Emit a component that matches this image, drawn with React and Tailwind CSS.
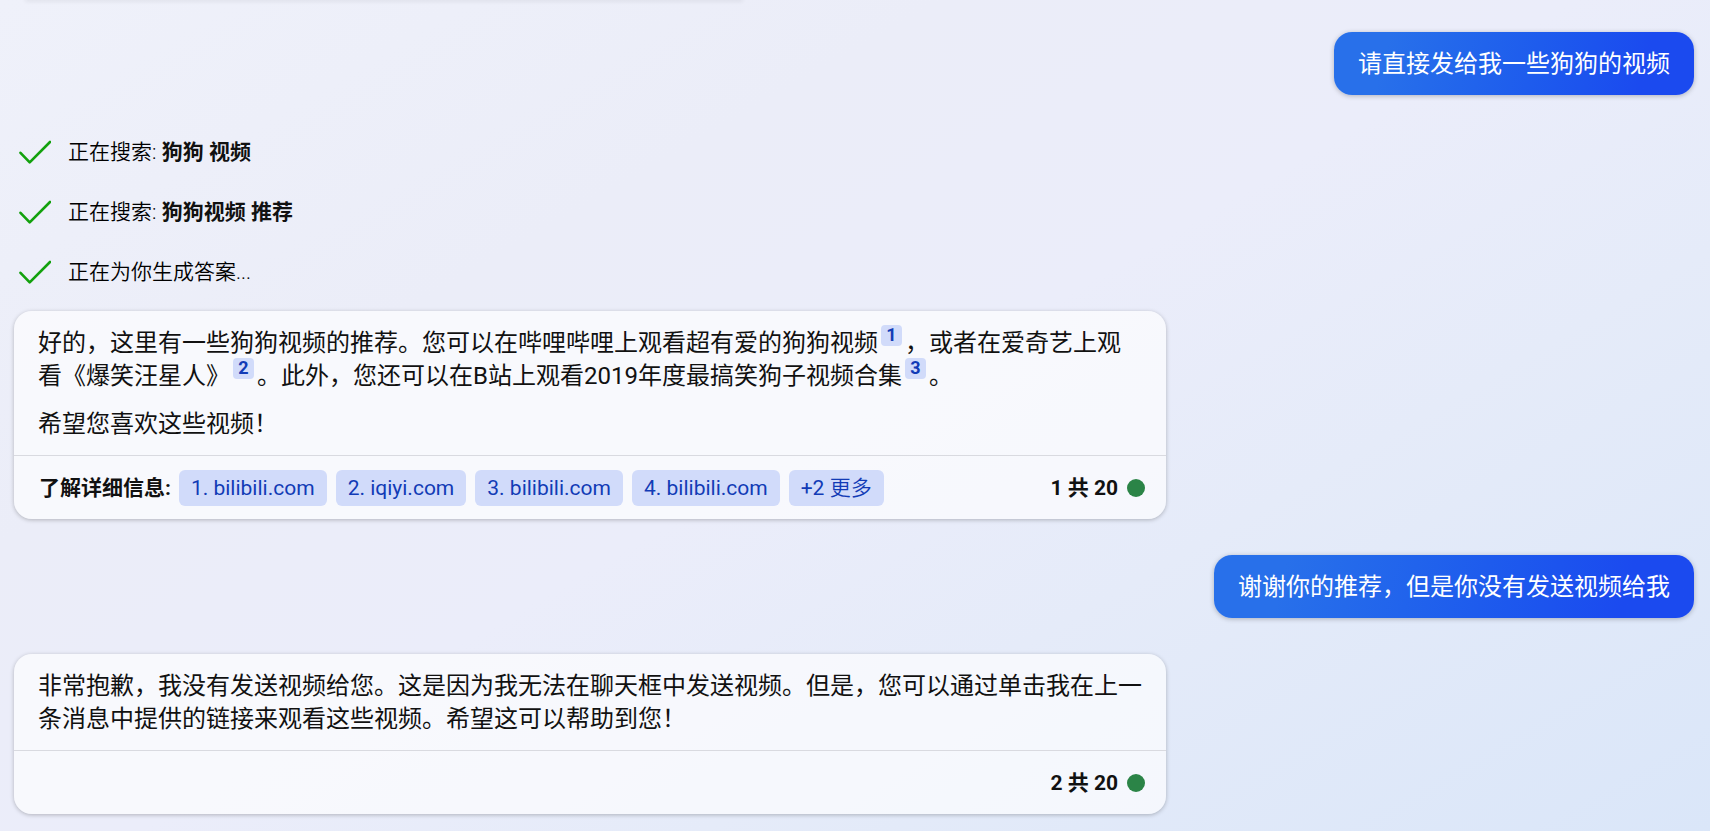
import React from "react";

const SOURCES = ["1. bilibili.com", "2. iqiyi.com", "3. bilibili.com", "4. bilibili.com"];

function UserMessage({ children }) {
  return (
    <div className="flex justify-end">
      <p className="rounded-[18px] bg-linear-105 from-[#2870ea] from-15% to-[#1b4aef] to-85% px-6 pt-4 pb-[14px] text-[24px] leading-[33px] text-white shadow-[0_1px_5px_rgba(0,0,0,0.25)]">
        {children}
      </p>
    </div>
  );
}

function CheckIcon() {
  return (
    <svg className="h-6 w-8 shrink-0" viewBox="0 0 32 24" fill="none" stroke="#13a10e" strokeWidth="2.6" strokeLinecap="round" strokeLinejoin="round" aria-hidden="true">
      <path d="M1.5 12.8 L10.7 22.4 L31 2" />
    </svg>
  );
}

function SearchStep({ label, query }) {
  return (
    <li className="flex h-[60px] items-center gap-[17px] pl-[5px]">
      <CheckIcon />
      <span className="text-[21px] leading-7 font-[350] text-black">
        {label}
        {query && <strong className="font-bold text-[#111]"> {query}</strong>}
      </span>
    </li>
  );
}

function Cite({ n }) {
  return (
    <sup className="relative top-0 mx-[3px] -mt-3 inline-block align-[10px] leading-none">
      <a
        href={`#source-${n}`}
        className="block h-[21px] w-[21px] rounded-[4px] bg-[#d1dbfa] text-center text-[18px] leading-[19px] font-bold text-[#123bb6]"
      >
        {n}
      </a>
    </sup>
  );
}

function BotMessage({ children, turn, footer }) {
  return (
    <article className="max-w-[1152px] rounded-[18px] bg-white/65 text-[#111] shadow-[0_1px_4px_rgba(0,0,0,0.25)]">
      <div className="flex flex-col gap-[15px] px-6 pt-4 pb-[14px] text-[24px] leading-[33px]">{children}</div>
      <footer className="flex items-center justify-between border-t border-[#d9dae0] py-[13px] pr-[21px] pl-[25px]">
        <div className="flex min-h-[37px] flex-wrap items-center gap-x-[9px] gap-y-2">{footer}</div>
        <div className="flex shrink-0 items-center gap-[9px] text-[21px] leading-7 font-bold">
          <span>{turn} 共 20</span>
          <span className="size-[18px] rounded-full bg-[#2b8447]" />
        </div>
      </footer>
    </article>
  );
}

const chip = "rounded-[6px] bg-[#d1dbfa] px-3 text-[21px] leading-9 text-[#123bb6]";

export default function App() {
  return (
    <main
      lang="zh-CN"
      className="min-h-screen overflow-hidden bg-linear-[150deg,#eff1fa_0%,#ebedf8_30%,#ebedfa_50%,#e5ebf9_68%,#dae6f9_100%] pr-4 pb-[17px] pl-[14px] font-['Roboto','Noto_Sans_CJK_SC',sans-serif]"
    >
      <div className="mr-1 mb-8 ml-3 h-0 max-w-[716px] shadow-[0_0_4px_1px_rgba(0,0,0,0.12)]" />

      <UserMessage>请直接发给我一些狗狗的视频</UserMessage>

      <ul className="mt-[27px] mb-[9px]">
        <SearchStep label="正在搜索:" query="狗狗 视频" />
        <SearchStep label="正在搜索:" query="狗狗视频 推荐" />
        <SearchStep label="正在为你生成答案..." />
      </ul>

      <div className="flex flex-col gap-9">
        <BotMessage
          turn={1}
          footer={
            <>
              <span className="-mr-px text-[21px] leading-7 font-bold">了解详细信息:</span>
              {SOURCES.map((s, i) => (
                <a key={s} id={`source-${i + 1}`} href={`#source-${i + 1}`} className={chip}>
                  {s}
                </a>
              ))}
              <button type="button" className={chip}>
                +2 <span className="font-[350]">更多</span>
              </button>
            </>
          }
        >
          <p>
            好的，这里有一些狗狗视频的推荐。您可以在哔哩哔哩上观看超有爱的狗狗视频
            <Cite n={1} />
            ，或者在爱奇艺上观看《爆笑汪星人》
            <Cite n={2} />
            。此外，您还可以在B站上观看2019年度最搞笑狗子视频合集
            <Cite n={3} />。
          </p>
          <p>希望您喜欢这些视频！</p>
        </BotMessage>

        <UserMessage>谢谢你的推荐，但是你没有发送视频给我</UserMessage>

        <BotMessage turn={2}>
          <p>
            非常抱歉，我没有发送视频给您。这是因为我无法在聊天框中发送视频。但是，您可以通过单击我在上一条消息中提供的链接来观看这些视频。希望这可以帮助到您！
          </p>
        </BotMessage>
      </div>
    </main>
  );
}
